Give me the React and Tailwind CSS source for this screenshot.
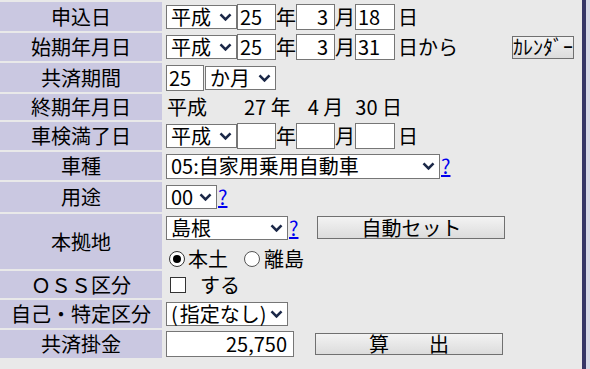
import React from "react";

const Chevron = () => (
  <svg width="13" height="9" viewBox="0 0 13 9" className="absolute right-[4px] top-1/2 -translate-y-1/2">
    <path d="M1.5 1.8 L6.5 6.8 L11.5 1.8" fill="none" stroke="#1b2848" strokeWidth="2.6" />
  </svg>
);

const Sel = ({ w, text, h = "h-[24px]", cls = "" }) => (
  <div className={`relative flex items-center ${h} bg-white border border-[#767676] pl-[4px] leading-none whitespace-nowrap shrink-0 ${cls}`} style={{ width: w }}>
    {text}
    <Chevron />
  </div>
);

const Inp = ({ w, text = "", right = false }) => (
  <div
    className={`flex items-center h-[26px] bg-white border border-[#767676] leading-none shrink-0 ${right ? "justify-end pr-[6px]" : "pl-[2px]"}`}
    style={{ width: w }}
  >
    {text}
  </div>
);

const Q = () => <span className="text-[#0000ee] underline leading-none ml-[1px]">?</span>;

const Btn = ({ w, h, children, cls = "" }) => (
  <div
    className={`flex items-center justify-center border border-[#707070] bg-gradient-to-b from-[#f3f3f3] to-[#dcdcdc] leading-none whitespace-pre shrink-0 ${cls}`}
    style={{ width: w, height: h }}
  >
    {children}
  </div>
);

const Row = ({ h, label, children }) => (
  <div className="flex" style={{ height: h }}>
    <div className="w-[162px] shrink-0 bg-[#cac8e1] flex items-center justify-center leading-none whitespace-nowrap">{label}</div>
    <div className="flex-1 flex items-center pl-[4px]">{children}</div>
  </div>
);

const DateRow = ({ y = "", m = "", d = "" }) => (
  <div className="flex items-center">
    <Sel w={71} text="平成" />
    <Inp w={39} text={y} />
    <span className="w-[20px] text-center leading-none">年</span>
    <Inp w={39} text={m} right />
    <span className="w-[20px] text-center leading-none">月</span>
    <Inp w={40} text={d} />
    <span className="ml-[3px] leading-none">日</span>
  </div>
);

export default function App() {
  return (
    <div className="w-[590px] h-[369px] bg-[#e9e9e9] text-black text-[20px] overflow-hidden flex" style={{ fontFamily: '"Noto Sans CJK JP", "Noto Sans", sans-serif' }}>
      <div className="flex-1 flex flex-col gap-[2px] pt-[2px]">
        <Row h={29} label="申込日">
          <DateRow y="25" m="3" d="18" />
        </Row>
        <Row h={28} label="始期年月日">
          <DateRow y="25" m="3" d="31" />
          <span className="leading-none">から</span>
          <Btn w={62} h={23} cls="ml-[54px]">ｶﾚﾝﾀﾞｰ</Btn>
        </Row>
        <Row h={29} label="共済期間">
          <Inp w={38} text="25" />
          <div className="ml-[1px]">
            <Sel w={71} text="か月" />
          </div>
        </Row>
        <Row h={26} label="終期年月日">
          <span className="leading-none w-[78px] pl-[1px]">平成</span>
          <span className="leading-none">27 年</span>
          <span className="leading-none ml-[17px]">4 月</span>
          <span className="leading-none ml-[12px]">30 日</span>
        </Row>
        <Row h={28} label="車検満了日">
          <DateRow />
        </Row>
        <Row h={28} label="車種">
          <Sel w={274} text="05:自家用乗用自動車" h="h-[25px]" />
          <Q />
        </Row>
        <Row h={30} label="用途">
          <Sel w={51} text="00" />
          <Q />
        </Row>
        <Row h={55} label="本拠地">
          <div className="flex flex-col gap-[9px] pt-[1px]">
            <div className="flex items-center">
              <Sel w={122} text="島根" />
              <Q />
              <Btn w={188} h={23} cls="ml-[19px]">自動セット</Btn>
            </div>
            <div className="flex items-center leading-none pl-[3px]">
              <span className="w-[16px] h-[16px] rounded-full border border-[#333] bg-white flex items-center justify-center">
                <span className="w-[8px] h-[8px] rounded-full bg-black" />
              </span>
              <span className="ml-[3px]">本土</span>
              <span className="ml-[16px] w-[16px] h-[16px] rounded-full border border-[#555] bg-white" />
              <span className="ml-[4px]">離島</span>
            </div>
          </div>
        </Row>
        <Row h={27} label="ＯＳＳ区分">
          <span className="ml-[4px] w-[16px] h-[16px] border border-[#333] bg-white" />
          <span className="ml-[14px] leading-none">する</span>
        </Row>
        <Row h={28} label="自己・特定区分">
          <Sel
            w={122}
            text={
              <>
                <span>(</span>
                <span className="ml-[2px]">指定なし</span>
                <span>)</span>
              </>
            }
          />
        </Row>
        <Row h={28} label="共済掛金">
          <Inp w={128} text="25,750" right />
          <Btn w={188} h={22} cls="ml-[21px]">算　　出</Btn>
        </Row>
      </div>
      <div className="w-[4px] bg-[#363666]" />
      <div className="w-[4px] bg-[#d6d8e6]" />
    </div>
  );
}
